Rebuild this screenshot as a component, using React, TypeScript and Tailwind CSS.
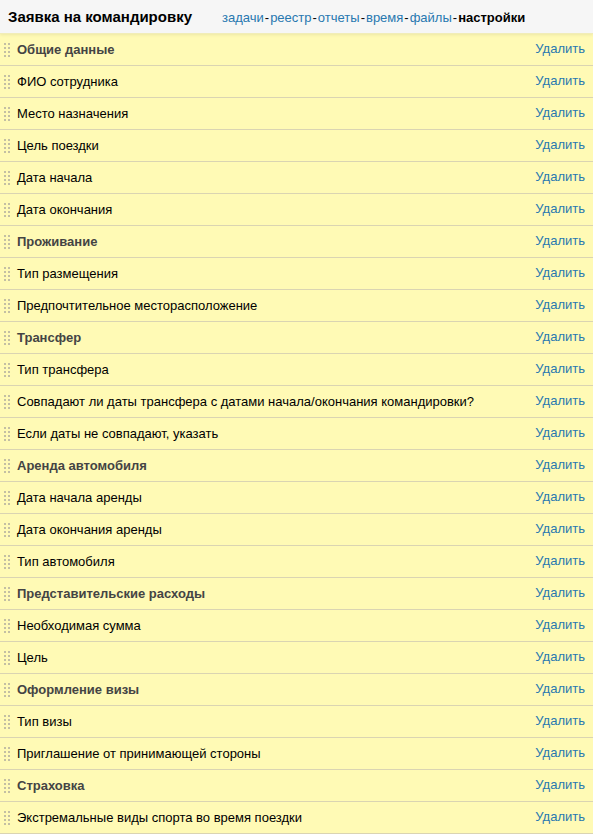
type Field = { title: string; section?: boolean };

const fields: Field[] = [
  { title: "Общие данные", section: true },
  { title: "ФИО сотрудника" },
  { title: "Место назначения" },
  { title: "Цель поездки" },
  { title: "Дата начала" },
  { title: "Дата окончания" },
  { title: "Проживание", section: true },
  { title: "Тип размещения" },
  { title: "Предпочтительное месторасположение" },
  { title: "Трансфер", section: true },
  { title: "Тип трансфера" },
  { title: "Совпадают ли даты трансфера с датами начала/окончания командировки?" },
  { title: "Если даты не совпадают, указать" },
  { title: "Аренда автомобиля", section: true },
  { title: "Дата начала аренды" },
  { title: "Дата окончания аренды" },
  { title: "Тип автомобиля" },
  { title: "Представительские расходы", section: true },
  { title: "Необходимая сумма" },
  { title: "Цель" },
  { title: "Оформление визы", section: true },
  { title: "Тип визы" },
  { title: "Приглашение от принимающей стороны" },
  { title: "Страховка", section: true },
  { title: "Экстремальные виды спорта во время поездки" },
];

const links = ["задачи", "реестр", "отчеты", "время", "файлы"];

function DragHandle() {
  return (
    <svg className="h-3.5 w-1.5 shrink-0 cursor-move" viewBox="0 0 6 14" fill="#c3bfa3" shapeRendering="crispEdges" aria-hidden="true">
      {[0, 4, 8, 12].map((y) => (
        <g key={y}>
          <rect x="0" y={y} width="2" height="2" />
          <rect x="4" y={y} width="2" height="2" />
        </g>
      ))}
    </svg>
  );
}

export default function App() {
  return (
    <div className="bg-[#fffab5] font-['Liberation_Sans',Arial,sans-serif] text-[13px] text-black">
      <header className="flex items-baseline gap-[30px] border-b border-[#f1edb8] bg-[#f6f6f6] px-2 pt-[7px] pb-[5px] shadow-[0_1px_3px_rgba(0,0,0,0.08)]">
        <h1 className="text-[15px] leading-5 font-bold whitespace-nowrap">Заявка на командировку</h1>
        <nav className="flex gap-px leading-5 whitespace-nowrap">
          {links.map((link) => (
            <span key={link} className="flex gap-px">
              <a href="#" className="text-[#2878b0]">{link}</a>
              <span>-</span>
            </span>
          ))}
          <b>настройки</b>
        </nav>
      </header>
      <ul>
        {fields.map((field) => (
          <li key={field.title} className="flex h-8 items-center gap-[7px] border-b border-[#dad4b2] pt-px pr-2 pl-1">
            <DragHandle />
            <span className={field.section ? "grow leading-5 font-bold text-[#444]" : "grow leading-5"}>{field.title}</span>
            <button type="button" className="cursor-pointer pb-0.5 leading-5 text-[#2878b0]">Удалить</button>
          </li>
        ))}
      </ul>
    </div>
  );
}
